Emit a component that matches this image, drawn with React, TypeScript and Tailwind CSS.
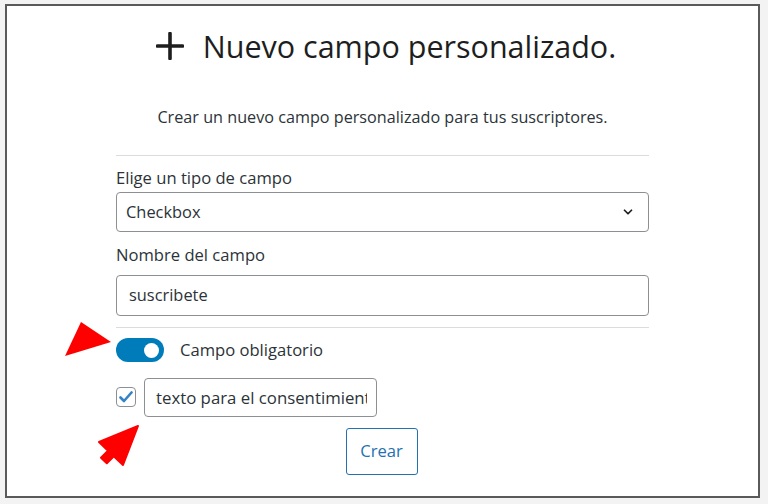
import { ChevronDown } from "lucide-react";

const font = { fontFamily: '"Open Sans", "Noto Sans", sans-serif' };

function Toggle() {
  return (
    <div className="w-12 h-6 rounded-full bg-[#007cba] flex items-center justify-end pr-[5px]">
      <div className="w-[15px] h-[15px] rounded-full bg-white" />
    </div>
  );
}

function CheckIcon() {
  return (
    <svg width="14" height="12" viewBox="0 0 14 12">
      <path d="M1.5 6.5 L5 10 L12.5 1.5" fill="none" stroke="#3582c4" strokeWidth="2.6" strokeLinecap="round" strokeLinejoin="round" />
    </svg>
  );
}

export default function App() {
  return (
    <div className="relative w-[768px] h-[504px] bg-[#f3f3f3] pt-[4px] pl-[5px] text-[#1e1e1e]" style={font}>
      <div className="w-[755px] h-[494px] bg-white border-2 border-[#5a5a5a] flex flex-col items-center pt-[22px]">
        <div className="flex items-center gap-[19px] h-[36px] pl-[7px]">
          <svg width="28" height="28" viewBox="0 0 28 28">
            <path d="M14 1.5 V26.5 M1.5 14 H26.5" stroke="#1e1e1e" strokeWidth="3.6" strokeLinecap="round" />
          </svg>
          <h1 className="text-[30.5px] leading-[36px] font-normal">Nuevo campo personalizado.</h1>
        </div>

        <p className="mt-[41px] text-[16.2px] leading-6 text-[#2c3338]">
          Crear un nuevo campo personalizado para tus suscriptores.
        </p>

        <div className="w-[533px] mt-[26px] flex flex-col text-[#2c3338]">
          <div className="h-px bg-[#dcdcde]" />

          <label className="mt-[11px] text-[16.6px] leading-[22px]">Elige un tipo de campo</label>
          <div className="mt-[3px] h-10 border border-[#8c8f94] rounded-[4px] flex items-center justify-between pl-[9px] pr-[13px]">
            <span className="text-[16.4px]">Checkbox</span>
            <ChevronDown size={14} strokeWidth={3} color="#1e1e1e" />
          </div>

          <label className="mt-[12px] text-[16.6px] leading-[22px]">Nombre del campo</label>
          <div className="mt-[9px] h-[41px] border border-[#8c8f94] rounded-[4px] flex items-center pl-[12px]">
            <span className="text-[16.4px]">suscribete</span>
          </div>

          <div className="mt-[11px] h-px bg-[#dcdcde]" />

          <div className="mt-[10px] flex items-center gap-4">
            <Toggle />
            <span className="text-[16.6px]">Campo obligatorio</span>
          </div>

          <div className="mt-[15px] flex items-center gap-2">
            <div className="w-5 h-5 border border-[#8c8f94] rounded-[4px] flex items-center justify-center">
              <CheckIcon />
            </div>
            <div className="w-[233px] h-[39px] border border-[#8c8f94] rounded-[4px] flex items-center pl-[11px] pr-[9px]">
              <div className="flex-1 overflow-hidden whitespace-nowrap text-[16.8px]">texto para el consentimiento</div>
            </div>
          </div>

          <div className="mt-[11px] flex justify-center pr-[2px]">
            <button className="w-[72px] h-[47px] border border-[#2271b1] rounded-[3px] text-[16.6px] text-[#2271b1] bg-white">
              Crear
            </button>
          </div>
        </div>
      </div>

      <svg className="absolute left-0 top-0 pointer-events-none" width="768" height="504" viewBox="0 0 768 504">
        <polygon points="81,322 111,342 65,356" fill="#ff0000" />
        <polygon
          points="138,426 123,465 113.8,456.3 106.8,463.3 101,457.7 108,450.7 99,442"
          fill="#ff0000"
          stroke="#ff0000"
          strokeWidth="2"
          strokeLinejoin="round"
        />
      </svg>
    </div>
  );
}
